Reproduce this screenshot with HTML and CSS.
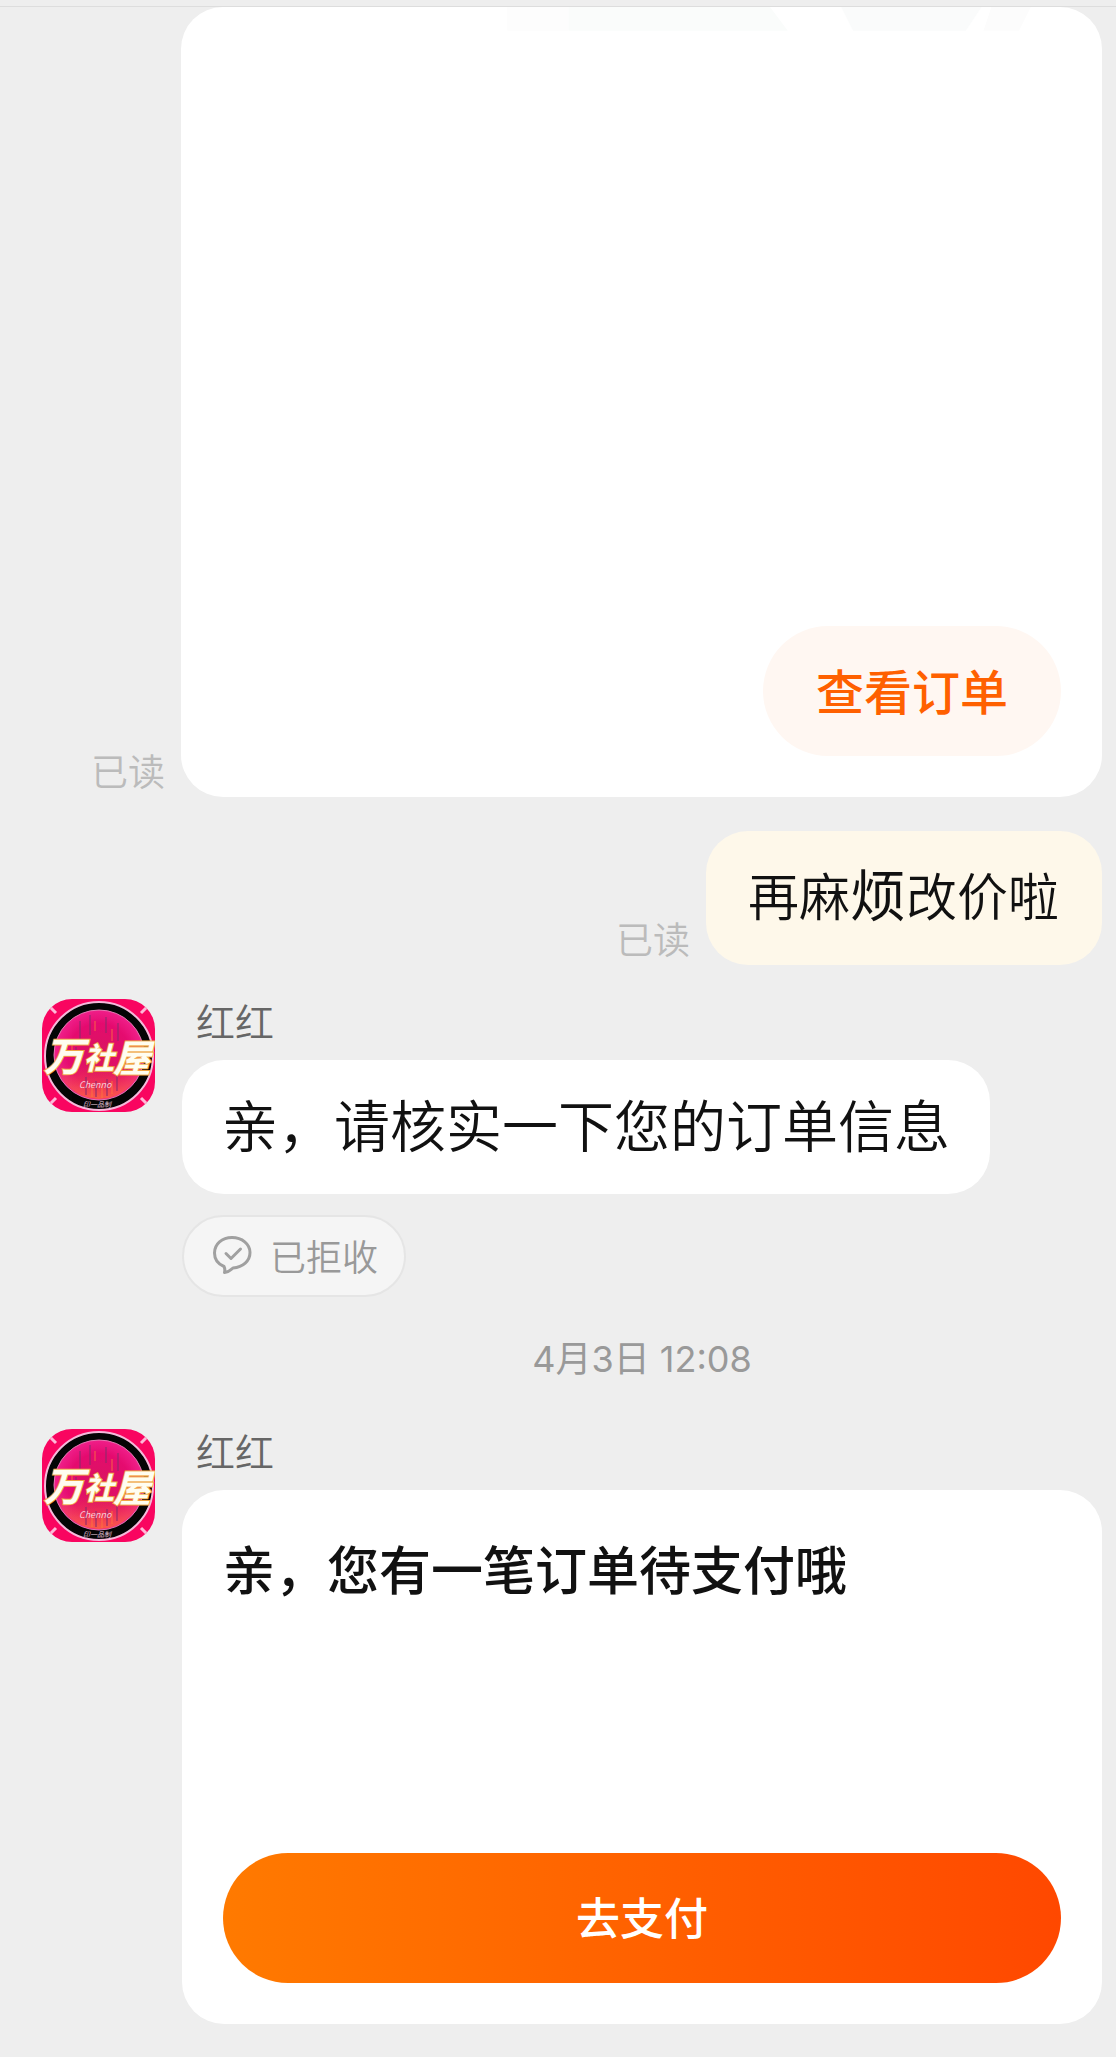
FILE: index.html
```
<!DOCTYPE html>
<html lang="zh-CN">
<head>
    <meta charset="UTF-8">
    <meta name="viewport" content="width=device-width, initial-scale=1">
    <title>红红</title>
    <link rel="stylesheet" href="styles.css">
</head>
<body>
<!-- 店铺头像，下面两处共用 -->
<svg class="defs" width="0" height="0" aria-hidden="true">
    <defs>
        <radialGradient id="disc">
            <stop offset="0" stop-color="#d8185f"/>
            <stop offset="0.7" stop-color="#e50c70"/>
            <stop offset="1" stop-color="#f0208a"/>
        </radialGradient>
        <linearGradient id="glow" x1="0" y1="0" x2="0" y2="1">
            <stop offset="0.6" stop-color="#f0503c" stop-opacity="0"/>
            <stop offset="1" stop-color="#ff6a38" stop-opacity="0.8"/>
        </linearGradient>
    </defs>
    <symbol id="shop-logo" viewBox="0 0 113 113">
        <rect width="113" height="113" fill="#f90560"/>
        <path d="M8 8l6 6M105 8l-6 6M8 105l6-6M105 105l-6-6" stroke="#ffb8d8" stroke-width="3"/>
        <circle cx="57" cy="57" r="54" fill="#050505" stroke="#f4b9da" stroke-width="2"/>
        <circle cx="57" cy="56" r="45" fill="url(#disc)" stroke="#e67bb4" stroke-width="1"/>
        <circle cx="57" cy="56" r="44" fill="url(#glow)"/>
        <path d="M38 22v22M48 16v20M64 18v16M76 24v18M34 48v24M44 78v18M54 82v16M65 80v17M75 76v16M85 54v20" stroke="#8d2a6c" stroke-width="2" opacity="0.55"/>
        <path d="M30 40v12M53 22v10M70 30v12M50 84v14M60 84v15M70 82v13" stroke="#ff7a3d" stroke-width="1" opacity="0.8"/>
        <g class="logo-name">
            <text x="2" y="72" font-size="40">万</text>
            <text x="42" y="70" font-size="30">社</text>
            <text x="71" y="73" font-size="38">屋</text>
        </g>
        <text class="logo-sub" x="37" y="89" font-size="9">Chenno</text>
        <text class="logo-sub" x="41" y="108" font-size="7">印一品制</text>
    </symbol>
</svg>

<header class="topbar"></header>

<main class="chat">
    <section class="row sent">
        <span class="read">已读</span>
        <div class="card order">
            <svg class="goods" viewBox="0 0 560 24" aria-hidden="true">
                <path d="M0 0h62v24H0z" fill="#fdfdfd"/>
                <path d="M62 0h204l18 24H62z" fill="#fafcfb"/>
                <path d="M338 0h142l-16 24H350z" fill="#fafbfb"/>
                <path d="M490 0h40l-12 24h-36z" fill="#fcfcfc"/>
            </svg>
            <button type="button" class="btn light">查看订单</button>
        </div>
    </section>

    <section class="row sent">
        <span class="read">已读</span>
        <p class="bubble mine">再麻<span class="alt">烦</span>改价啦</p>
    </section>

    <section class="row">
        <svg class="avatar" role="img" aria-label="万社屋"><use href="#shop-logo"/></svg>
        <div class="content">
            <div class="name">红红</div>
            <p class="bubble">亲，请核实一下您的订单信息</p>
            <div class="state">
                <svg width="40" height="40" viewBox="0 0 40 40" fill="none" stroke="#a0a0a0" stroke-width="3" stroke-linejoin="round" stroke-linecap="round" aria-hidden="true">
                    <path d="M12 31.500C6 29 2.500 24 2.500 18C2.500 9 10 2.500 20 2.500S38 9 38 17.500C38 26 31 32 21 33C18.500 35.500 15.500 37 12.500 37.500C13 35.500 13 33.500 12 31.500Z"/>
                    <path d="M14 18.500l5 5 9.500-9.500"/>
                </svg>
                <span>已拒收</span>
            </div>
        </div>
    </section>

    <time class="time">4月3日 12:08</time>

    <section class="row">
        <svg class="avatar" role="img" aria-label="万社屋"><use href="#shop-logo"/></svg>
        <div class="content">
            <div class="name">红红</div>
            <div class="card pay">
                <h2 class="title">亲，您有一笔订单待支付哦</h2>
                <button type="button" class="btn primary">去支付</button>
            </div>
        </div>
    </section>
</main>
</body>
</html>
```
FILE: styles.css
```
* {
    box-sizing: border-box;
    margin: 0;
    padding: 0;
}

body {
    background: #eee;
    color: #111;
    font-family: Inter, "Noto Sans CJK SC", sans-serif;
    font-weight: 350;
}

.defs {
    position: absolute;
}

.topbar {
    height: 7px;
    border-bottom: 1px solid #ddd;
}

.chat {
    padding: 0 14px 33px 42px;
}

.row {
    display: flex;
    align-items: flex-start;
    gap: 27px;
}

.sent {
    align-items: flex-end;
    justify-content: flex-end;
    gap: 16px;
    padding-left: 49px;
    margin-bottom: 34px;
}

.read {
    flex: none;
    font-size: 37px;
    line-height: 48px;
    color: #bbb;
}

.card {
    display: flex;
    flex-direction: column;
    justify-content: space-between;
    padding: 41px;
    border-radius: 42px;
    background: #fff;
}

.order {
    flex: 1;
    min-height: 790px;
    padding-top: 0;
}

.goods {
    width: 66%;
    align-self: flex-end;
}

.btn {
    height: 130px;
    padding-bottom: 4px;
    border: 0;
    border-radius: 65px;
    font-family: inherit;
    font-weight: 500;
    cursor: pointer;
}

.light {
    align-self: flex-end;
    padding-left: 53px;
    padding-right: 53px;
    background: #fff7f2;
    color: #ff6000;
    font-size: 48px;
}

.primary {
    background: linear-gradient(90deg, #ff7a00, #ff4800);
    color: #fff;
    font-size: 44px;
}

.bubble {
    width: fit-content;
    padding: 28px 40px;
    border-radius: 42px;
    background: #fff;
    font-size: 56px;
    line-height: 78px;
}

.mine {
    padding: 28px 43px 28px 42px;
    background: #fef8ea;
    font-size: 51px;
}

.alt {
    font-size: 56px;
    font-weight: 400;
    line-height: 1;
}

.avatar {
    flex: none;
    width: 113px;
    height: 113px;
    border-radius: 30px;
}

.logo-name {
    font-family: "Noto Sans CJK SC", sans-serif;
    font-weight: 700;
    font-style: italic;
    fill: #fffdf0;
    stroke: #f0a544;
    stroke-width: 2px;
    paint-order: stroke;
}

.logo-sub {
    font-family: "Noto Sans CJK SC", sans-serif;
    font-style: italic;
    fill: #f6d5e4;
}

.content {
    flex: 1;
}

.name {
    padding-left: 14px;
    margin-bottom: 13px;
    font-size: 39px;
    line-height: 48px;
    color: #666;
}

.state {
    display: flex;
    align-items: center;
    gap: 18px;
    width: fit-content;
    height: 82px;
    margin-top: 21px;
    padding: 0 26px 3px 28px;
    border: 2px solid #e5e5e5;
    border-radius: 41px;
    background: #f5f5f5;
    color: #999;
    font-size: 36px;
}

.time {
    display: block;
    margin: 40px 0 48px 140px;
    font-size: 36px;
    line-height: 44px;
    font-weight: 400;
    text-align: center;
    color: #999;
}

.pay {
    min-height: 534px;
}

.title {
    font-size: 52px;
    line-height: 82px;
    font-weight: 500;
}
```
